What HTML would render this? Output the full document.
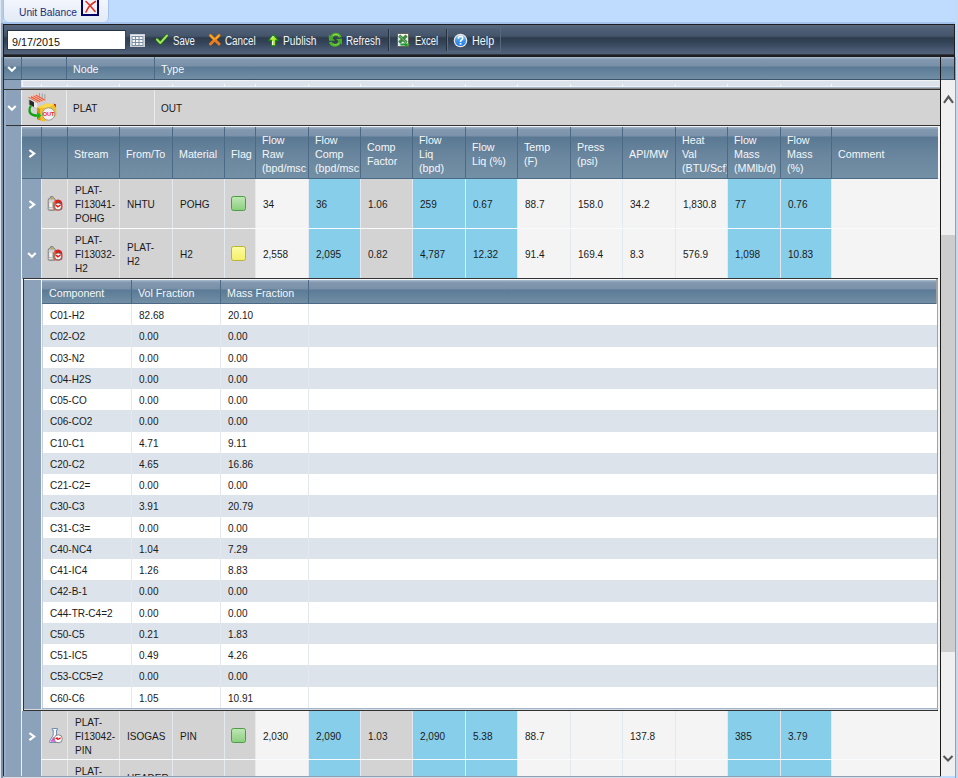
<!DOCTYPE html><html><head><meta charset='utf-8'><style>
*{box-sizing:border-box;margin:0;padding:0}
html,body{width:958px;height:778px;overflow:hidden;background:#bfdbfe;font-family:"Liberation Sans", sans-serif;}
.a{position:absolute}
.t{position:absolute;white-space:nowrap;line-height:14px;transform-origin:0 0}
.hdr{background:linear-gradient(#a3b6c9 0px,#a3b6c9 1px,#8499b0 2px,#7890a8 9px,#5b7a95 10px,#7390a6 100%)}
.hdr2{background:linear-gradient(#9fb2c5 0px,#9fb2c5 1px,#8399b0 2px,#7b92aa 9px,#5a7893 10px,#6a869e 28px,#7390a6 100%)}
.ht{position:absolute;white-space:nowrap;line-height:14px;font-size:11.5px;color:#f4f7fa;transform:scaleX(0.93);transform-origin:0 0}
.dt{position:absolute;white-space:nowrap;line-height:14px;font-size:11px;color:#1a1a1a;transform:scaleX(0.91);transform-origin:0 0}
</style></head><body><div class='a' style='left:0px;top:0px;width:1px;height:778px;background:#dfe6ee;'></div><div class='a' style='left:1px;top:0px;width:2px;height:23px;background:#b3cdea;'></div><div class='a' style='left:1px;top:23px;width:2px;height:34px;background:#8e9fb4;'></div><div class='a' style='left:1px;top:57px;width:2px;height:721px;background:#7b8fa8;'></div><div class='a' style='left:3px;top:-3px;width:106px;height:25px;background:linear-gradient(#f5f8fd,#e2eaf5);border-left:1px solid #a5c3ea;border-right:1px solid #a5c3ea;border-radius:0 0 5px 5px'></div><div class='t' style='left:18.5px;top:4.9px;font-size:11px;color:#1f2b78;transform:scaleX(0.93)'>Unit Balance</div><div class='a' style='left:81px;top:-2px;width:18px;height:18px;border:2px solid #000066;background:#eef2f8'></div><svg class='a' style='left:84px;top:0' width='13' height='14' viewBox='0 0 13 14'><path d='M2 1.5 C5 4 8 8 11 11.5' stroke='#e0301e' stroke-width='1.6' fill='none' stroke-linecap='round'/><path d='M11.5 1.5 C8 3.5 4 7 2 12' stroke='#e0301e' stroke-width='1.6' fill='none' stroke-linecap='round'/></svg><div class='a' style='left:3px;top:22px;width:952px;height:2px;background:#a3c3ec;'></div><div class='a' style='left:3px;top:24px;width:952px;height:33px;background:#1e1e1e;'></div><div class='a' style='left:4px;top:25px;width:950px;height:29px;background:linear-gradient(#58697f 0%,#4e5e74 15%,#44546a 38%,#2e3c4d 45%,#34455a 62%,#475870 85%,#52627a 100%);'></div><div class='a' style='left:4px;top:54px;width:950px;height:1px;background:#2f3844;'></div><div class='a' style='left:7px;top:30px;width:119px;height:20px;background:#fff;border:1px solid #3a4656;border-left-color:#2a3440;border-top-color:#2a3440'></div><div class='t' style='left:12px;top:34.9px;font-size:11px;color:#111;transform:scaleX(0.98)'>9/17/2015</div><div class='t' style='left:173.3px;top:34.1px;color:#f2f5f8;font-size:12px;transform:scaleX(0.8)'>Save</div><div class='t' style='left:225.3px;top:34.1px;color:#f2f5f8;font-size:12px;transform:scaleX(0.82)'>Cancel</div><div class='t' style='left:282.5px;top:34.1px;color:#f2f5f8;font-size:12px;transform:scaleX(0.85)'>Publish</div><div class='t' style='left:346.3px;top:34.1px;color:#f2f5f8;font-size:12px;transform:scaleX(0.82)'>Refresh</div><div class='t' style='left:415.3px;top:34.1px;color:#f2f5f8;font-size:12px;transform:scaleX(0.79)'>Excel</div><div class='t' style='left:472px;top:34.1px;color:#f2f5f8;font-size:12px;transform:scaleX(0.9)'>Help</div><div class='a' style='left:447px;top:27px;width:54px;height:25px;background:transparent;border:1px solid #56687e;border-left:none'></div><div class='a' style='left:388px;top:29px;width:1px;height:22px;background:#27313d;'></div><div class='a' style='left:389px;top:29px;width:1px;height:22px;background:#5d6e84;'></div><div class='a' style='left:446px;top:29px;width:1px;height:22px;background:#27313d;'></div><div class='a' style='left:447px;top:29px;width:1px;height:22px;background:#5d6e84;'></div><svg class='a' style='left:130px;top:34px' width='15' height='13' viewBox='0 0 15 13'><rect x='0.5' y='0.5' width='14' height='12' fill='#e8ecf0' stroke='#c9d0d8'/><rect x='1.5' y='2' width='12' height='10' fill='#7d8fa3'/><g fill='#f4f6f8'><rect x='2.5' y='3' width='2.5' height='2'/><rect x='6' y='3' width='2.5' height='2'/><rect x='9.5' y='3' width='3' height='2'/><rect x='2.5' y='6' width='2.5' height='2'/><rect x='6' y='6' width='2.5' height='2'/><rect x='9.5' y='6' width='3' height='2'/><rect x='2.5' y='9' width='2.5' height='2'/><rect x='6' y='9' width='2.5' height='2'/><rect x='9.5' y='9' width='3' height='2'/></g></svg><svg class='a' style='left:156px;top:34px' width='12' height='11' viewBox='0 0 12 11'>
<path d='M1 5.5 L4.3 9 L11 1.5' stroke='#1d6a12' stroke-width='3.6' fill='none' stroke-linejoin='round' stroke-linecap='round'/>
<path d='M1 5.5 L4.3 9 L11 1.5' stroke='#9fe45a' stroke-width='2' fill='none' stroke-linejoin='round' stroke-linecap='round'/>
</svg><svg class='a' style='left:209px;top:34px' width='12' height='12' viewBox='0 0 12 12'>
<path d='M1.5 1.5 L10 10 M10 1.5 L1.5 10' stroke='#f07a18' stroke-width='3' fill='none' stroke-linecap='round'/>
<path d='M1.5 1.5 L5.5 5.5 M10 1.5 L7 4.5' stroke='#f9b020' stroke-width='1.6' fill='none' stroke-linecap='round'/>
</svg><svg class='a' style='left:268px;top:34px' width='11' height='13' viewBox='0 0 11 13'>
<path d='M5.5 0.8 L10.2 6.3 L7.5 6.3 L7.5 11.8 L3.5 11.8 L3.5 6.3 L0.8 6.3 Z' fill='#b0ee30' stroke='#138a0a' stroke-width='1.2' stroke-linejoin='round'/>
<path d='M5.3 2 L2.5 5.3 M4.5 7 L4.5 11' stroke='#f4ffd8' stroke-width='1' fill='none'/>
</svg><svg class='a' style='left:328px;top:32px' width='15' height='15' viewBox='0 0 15 15'>
<path d='M12.3 5.4 C10.8 1.2 5 0.6 3 6' stroke='#4fb424' stroke-width='2.8' fill='none'/>
<path d='M0.9 2.6 L0.9 8.8 L7 8.8 Z' fill='#48ac20'/>
<path d='M2.2 10 C4 14.4 10 14.8 12.2 9.3' stroke='#4fb424' stroke-width='2.8' fill='none'/>
<path d='M14 6.6 L14 12.8 L8 7 Z' fill='#48ac20'/>
<path d='M11 4 C9.5 2.2 6.5 2 4.8 3.8' stroke='#a6ea5e' stroke-width='1' fill='none'/>
<path d='M5 12 C7 13.4 10 13 11 11' stroke='#8ad84a' stroke-width='0.9' fill='none'/>
</svg><svg class='a' style='left:397px;top:33px' width='14' height='15' viewBox='0 0 14 15'>
<rect x='0.5' y='0.5' width='11' height='13' fill='#dfe9f7' stroke='#6a625a' stroke-width='1'/>
<rect x='1' y='1' width='10' height='2.5' fill='#f6f9fd'/>
<path d='M2.2 2.6 L9.6 9.6 M9.6 2.6 L2.2 9.6' stroke='#3d8a38' stroke-width='3'/>
<path d='M2.6 3 L9 9' stroke='#86bf7e' stroke-width='0.9'/>
<path d='M3.5 10.6 L7.8 10.6 L7.8 8.6 L12.6 11.6 L7.8 14.6 L7.8 12.6 L3.5 12.6 Z' fill='#1f9a2a'/>
<path d='M8.4 9.6 L11.4 11.5' stroke='#8fe07a' stroke-width='1'/>
</svg><svg class='a' style='left:453px;top:33px' width='15' height='15' viewBox='0 0 15 15'>
<defs><linearGradient id='hg' x1='0' y1='0' x2='0' y2='1'><stop offset='0' stop-color='#8ccaf8'/><stop offset='0.5' stop-color='#3e98ef'/><stop offset='1' stop-color='#1a78e6'/></linearGradient></defs>
<circle cx='7.5' cy='7.5' r='6.8' fill='#efe8e0'/>
<circle cx='7.5' cy='7.5' r='5.6' fill='url(#hg)'/>
<path d='M5.3 5.6 Q5.4 3.3 7.6 3.3 Q9.8 3.4 9.7 5.3 Q9.6 6.6 8.2 7.3 Q7.5 7.7 7.5 8.9' stroke='#fff' stroke-width='1.6' fill='none'/>
<rect x='6.6' y='10' width='1.8' height='1.6' fill='#fff'/>
</svg><div class='a' style='left:3px;top:57px;width:938px;height:721px;background:#f4f4f4;'></div><div class='a' style='left:3px;top:57px;width:1px;height:721px;background:#2a2a2a;'></div><div class='a' style='left:940px;top:57px;width:1px;height:721px;background:#1a1a1a;'></div><div class='a hdr' style='left:4px;top:57px;width:936px;height:23px'></div><div class='a' style='left:4px;top:79px;width:936px;height:1px;background:#3d5670;'></div><div class='a hdr' style='left:941px;top:57px;width:14px;height:23px'></div><div class='a' style='left:941px;top:79px;width:14px;height:1px;background:#3d5670;'></div><div class='a' style='left:954px;top:57px;width:1px;height:23px;background:#2a2a2a;'></div><div class='a' style='left:21px;top:57px;width:1px;height:22px;background:#4c6a85;'></div><div class='a' style='left:66px;top:57px;width:1px;height:22px;background:#4c6a85;'></div><div class='a' style='left:154px;top:57px;width:1px;height:22px;background:#4c6a85;'></div><svg class='a' style='left:7px;top:64px' width='10' height='9' viewBox='0 0 10 9'><path d='M1.1 2.9 L4.9 6.8 L8.7 2.9' stroke='#fff' stroke-width='2.1' fill='none'/></svg><div class='ht' style='left:73px;top:61.9px'>Node</div><div class='ht' style='left:161px;top:61.9px'>Type</div><div class='a' style='left:4px;top:80px;width:17px;height:9px;background:#8ca1ba;'></div><div class='a' style='left:21px;top:80px;width:919px;height:9px;background:#dde3ea;'></div><div class='a' style='left:22px;top:80px;width:917px;height:1px;background:#f0f3f6;'></div><div class='a' style='left:22px;top:80px;width:1px;height:7px;background:#f4f6f8;'></div><div class='a' style='left:22px;top:86px;width:917px;height:1px;background:#f0f3f6;'></div><div class='a' style='left:21px;top:87px;width:919px;height:1px;background:#a5b6c8;'></div><div class='a' style='left:21px;top:88px;width:919px;height:1px;background:#8c8c8c;'></div><div class='a' style='left:41px;top:84px;width:1px;height:3px;background:#f6f8fa;'></div><div class='a' style='left:67px;top:84px;width:1px;height:3px;background:#f6f8fa;'></div><div class='a' style='left:119px;top:84px;width:1px;height:3px;background:#f6f8fa;'></div><div class='a' style='left:172px;top:84px;width:1px;height:3px;background:#f6f8fa;'></div><div class='a' style='left:224px;top:84px;width:1px;height:3px;background:#f6f8fa;'></div><div class='a' style='left:255px;top:84px;width:1px;height:3px;background:#f6f8fa;'></div><div class='a' style='left:308px;top:84px;width:1px;height:3px;background:#f6f8fa;'></div><div class='a' style='left:360px;top:84px;width:1px;height:3px;background:#f6f8fa;'></div><div class='a' style='left:412px;top:84px;width:1px;height:3px;background:#f6f8fa;'></div><div class='a' style='left:465px;top:84px;width:1px;height:3px;background:#f6f8fa;'></div><div class='a' style='left:517px;top:84px;width:1px;height:3px;background:#f6f8fa;'></div><div class='a' style='left:570px;top:84px;width:1px;height:3px;background:#f6f8fa;'></div><div class='a' style='left:622px;top:84px;width:1px;height:3px;background:#f6f8fa;'></div><div class='a' style='left:675px;top:84px;width:1px;height:3px;background:#f6f8fa;'></div><div class='a' style='left:727px;top:84px;width:1px;height:3px;background:#f6f8fa;'></div><div class='a' style='left:780px;top:84px;width:1px;height:3px;background:#f6f8fa;'></div><div class='a' style='left:831px;top:84px;width:1px;height:3px;background:#f6f8fa;'></div><div class='a' style='left:3px;top:89px;width:937px;height:1px;background:#333;'></div><div class='a' style='left:4px;top:90px;width:17px;height:35px;background:#8ca1ba;'></div><div class='a' style='left:21px;top:90px;width:919px;height:35px;background:#d3d3d3;'></div><div class='a' style='left:21px;top:90px;width:1px;height:35px;background:#eef0f2;'></div><div class='a' style='left:66px;top:90px;width:1px;height:35px;background:#e8eaec;'></div><div class='a' style='left:154px;top:90px;width:1px;height:35px;background:#e8eaec;'></div><svg class='a' style='left:7px;top:103px' width='10' height='9' viewBox='0 0 10 9'><path d='M1.1 2.9 L4.9 6.8 L8.7 2.9' stroke='#fff' stroke-width='2.1' fill='none'/></svg><svg class='a' style='left:27px;top:92px' width='31' height='31' viewBox='0 0 31 31'>
<g stroke='#9a9a9a' stroke-width='0.9'><path d='M12.5 1 V9'/><path d='M15.2 1.5 V10'/><path d='M17.8 2 V10.5'/></g>
<path d='M1 5 L9 2.5 L19 8 L11 11 Z' fill='#f4d8cc'/>
<g stroke='#ee5a3a' stroke-width='1.25'><path d='M1.5 5.4 L11 10.8'/><path d='M3.9 4.6 L13.4 10'/><path d='M6.3 3.8 L15.8 9.2'/><path d='M8.7 3 L18.2 8.4'/></g>
<path d='M1.2 5.5 L11 11 L11 17.5 L1.8 12.5 Z' fill='#e9e9e9' stroke='#a8a8a8' stroke-width='0.5'/>
<path d='M11 11 L19 8 L19 13.5 L11 17.5 Z' fill='#cfcfcf'/>
<path d='M2.3 7.6 L7 10.2 L7 15 L2.3 12.4 Z' fill='#2a2a2a'/>
<path d='M10 15.5 L20 11.5 L29 12.5 L29.5 24 L17 29.5 L10.5 27.5 Z' fill='#f0bf2a'/>
<path d='M10 15.5 L20 11.5 L29 12.5 L19 16 Z' fill='#fcd84a'/>
<path d='M10 15.5 L13 17 L13.5 28.5 L10.5 27.5 Z' fill='#c99418'/>
<path d='M26.5 11.5 L29 12.5 L28.5 15.5 Z' fill='#b02010'/>
<path d='M4 13.5 Q1.5 17.5 3.2 21 Q5 23.6 10.5 23.6' stroke='#10a010' stroke-width='2.3' fill='none'/>
<path d='M10 20 L14.3 23.6 L10 27.3 Z' fill='#14b814'/>
<circle cx='21.6' cy='22' r='6.2' fill='#f2f2f2' stroke='#8a8a8a' stroke-width='0.8'/>
<text x='21.6' y='24' font-family='Liberation Sans' font-weight='bold' font-size='5.6' fill='#ee1c1c' text-anchor='middle'>OUT</text>
</svg><div class='dt' style='left:73px;top:101.2px'>PLAT</div><div class='dt' style='left:161px;top:101.2px'>OUT</div><div class='a' style='left:3px;top:125px;width:937px;height:1px;background:#333;'></div><div class='a' style='left:4px;top:126px;width:17px;height:650px;background:#8ca1ba;'></div><div class='a' style='left:4px;top:90px;width:2px;height:686px;background:#9aafc6;'></div><div class='a' style='left:21px;top:126px;width:1px;height:650px;background:#eef0f2;'></div><div class='a' style='left:22px;top:126px;width:918px;height:1px;background:#f0f2f4;'></div><div class='a hdr2' style='left:22px;top:127px;width:916px;height:51px'></div><div class='a' style='left:22px;top:178px;width:916px;height:1px;background:#4c6a85;'></div><div class='a' style='left:41px;top:127px;width:1px;height:51px;background:#4c6a85;'></div><div class='a' style='left:67px;top:127px;width:1px;height:51px;background:#4c6a85;'></div><div class='a' style='left:119px;top:127px;width:1px;height:51px;background:#4c6a85;'></div><div class='a' style='left:172px;top:127px;width:1px;height:51px;background:#4c6a85;'></div><div class='a' style='left:224px;top:127px;width:1px;height:51px;background:#4c6a85;'></div><div class='a' style='left:255px;top:127px;width:1px;height:51px;background:#4c6a85;'></div><div class='a' style='left:308px;top:127px;width:1px;height:51px;background:#4c6a85;'></div><div class='a' style='left:360px;top:127px;width:1px;height:51px;background:#4c6a85;'></div><div class='a' style='left:412px;top:127px;width:1px;height:51px;background:#4c6a85;'></div><div class='a' style='left:465px;top:127px;width:1px;height:51px;background:#4c6a85;'></div><div class='a' style='left:517px;top:127px;width:1px;height:51px;background:#4c6a85;'></div><div class='a' style='left:570px;top:127px;width:1px;height:51px;background:#4c6a85;'></div><div class='a' style='left:622px;top:127px;width:1px;height:51px;background:#4c6a85;'></div><div class='a' style='left:675px;top:127px;width:1px;height:51px;background:#4c6a85;'></div><div class='a' style='left:727px;top:127px;width:1px;height:51px;background:#4c6a85;'></div><div class='a' style='left:780px;top:127px;width:1px;height:51px;background:#4c6a85;'></div><div class='a' style='left:831px;top:127px;width:1px;height:51px;background:#4c6a85;'></div><svg class='a' style='left:28px;top:148px' width='8' height='11' viewBox='0 0 8 11'><path d='M1.4 2.0 L6.2 5.6 L1.4 9.2' stroke='#fff' stroke-width='2.1' fill='none'/></svg><div class='ht' style='left:74px;top:146.9px;width:48.39px;overflow:hidden'>Stream</div><div class='ht' style='left:126px;top:146.9px;width:49.46px;overflow:hidden'>From/To</div><div class='ht' style='left:179px;top:146.9px;width:48.39px;overflow:hidden'>Material</div><div class='ht' style='left:231px;top:146.9px;width:25.81px;overflow:hidden'>Flag</div><div class='ht' style='left:262px;top:132.9px;width:49.46px;overflow:hidden'>Flow<br>Raw<br>(bpd/msc</div><div class='ht' style='left:315px;top:132.9px;width:48.39px;overflow:hidden'>Flow<br>Comp<br>(bpd/msc</div><div class='ht' style='left:367px;top:139.9px;width:48.39px;overflow:hidden'>Comp<br>Factor</div><div class='ht' style='left:419px;top:132.9px;width:49.46px;overflow:hidden'>Flow<br>Liq<br>(bpd)</div><div class='ht' style='left:472px;top:139.9px;width:48.39px;overflow:hidden'>Flow<br>Liq (%)</div><div class='ht' style='left:524px;top:139.9px;width:49.46px;overflow:hidden'>Temp<br>(F)</div><div class='ht' style='left:577px;top:139.9px;width:48.39px;overflow:hidden'>Press<br>(psi)</div><div class='ht' style='left:629px;top:146.9px;width:49.46px;overflow:hidden'>API/MW</div><div class='ht' style='left:682px;top:132.9px;width:48.39px;overflow:hidden'>Heat<br>Val<br>(BTU/Scf)</div><div class='ht' style='left:734px;top:132.9px;width:49.46px;overflow:hidden'>Flow<br>Mass<br>(MMlb/d)</div><div class='ht' style='left:787px;top:132.9px;width:47.31px;overflow:hidden'>Flow<br>Mass<br>(%)</div><div class='ht' style='left:838px;top:146.9px;width:107.53px;overflow:hidden'>Comment</div><div class='a' style='left:22px;top:179px;width:19px;height:50px;background:#8ca1ba;'></div><div class='a' style='left:41px;top:179px;width:1px;height:49px;background:#e4e9ef;'></div><div class='a' style='left:42px;top:179px;width:25px;height:49px;background:#d3d3d3;'></div><div class='a' style='left:67px;top:179px;width:1px;height:49px;background:#e4e9ef;'></div><div class='a' style='left:68px;top:179px;width:51px;height:49px;background:#d3d3d3;'></div><div class='a' style='left:119px;top:179px;width:1px;height:49px;background:#e4e9ef;'></div><div class='a' style='left:120px;top:179px;width:52px;height:49px;background:#d3d3d3;'></div><div class='a' style='left:172px;top:179px;width:1px;height:49px;background:#e4e9ef;'></div><div class='a' style='left:173px;top:179px;width:51px;height:49px;background:#d3d3d3;'></div><div class='a' style='left:224px;top:179px;width:1px;height:49px;background:#e4e9ef;'></div><div class='a' style='left:225px;top:179px;width:30px;height:49px;background:#d3d3d3;'></div><div class='a' style='left:255px;top:179px;width:1px;height:49px;background:#e4e9ef;'></div><div class='a' style='left:256px;top:179px;width:52px;height:49px;background:#f4f4f4;'></div><div class='a' style='left:308px;top:179px;width:1px;height:49px;background:#e4e9ef;'></div><div class='a' style='left:309px;top:179px;width:51px;height:49px;background:#87ceeb;'></div><div class='a' style='left:360px;top:179px;width:1px;height:49px;background:#e4e9ef;'></div><div class='a' style='left:361px;top:179px;width:51px;height:49px;background:#d3d3d3;'></div><div class='a' style='left:412px;top:179px;width:1px;height:49px;background:#e4e9ef;'></div><div class='a' style='left:413px;top:179px;width:52px;height:49px;background:#87ceeb;'></div><div class='a' style='left:465px;top:179px;width:1px;height:49px;background:#e4e9ef;'></div><div class='a' style='left:466px;top:179px;width:51px;height:49px;background:#87ceeb;'></div><div class='a' style='left:517px;top:179px;width:1px;height:49px;background:#e4e9ef;'></div><div class='a' style='left:518px;top:179px;width:52px;height:49px;background:#f4f4f4;'></div><div class='a' style='left:570px;top:179px;width:1px;height:49px;background:#e4e9ef;'></div><div class='a' style='left:571px;top:179px;width:51px;height:49px;background:#f4f4f4;'></div><div class='a' style='left:622px;top:179px;width:1px;height:49px;background:#e4e9ef;'></div><div class='a' style='left:623px;top:179px;width:52px;height:49px;background:#f4f4f4;'></div><div class='a' style='left:675px;top:179px;width:1px;height:49px;background:#e4e9ef;'></div><div class='a' style='left:676px;top:179px;width:51px;height:49px;background:#f4f4f4;'></div><div class='a' style='left:727px;top:179px;width:1px;height:49px;background:#e4e9ef;'></div><div class='a' style='left:728px;top:179px;width:52px;height:49px;background:#87ceeb;'></div><div class='a' style='left:780px;top:179px;width:1px;height:49px;background:#e4e9ef;'></div><div class='a' style='left:781px;top:179px;width:50px;height:49px;background:#87ceeb;'></div><div class='a' style='left:831px;top:179px;width:1px;height:49px;background:#e4e9ef;'></div><div class='a' style='left:832px;top:179px;width:106px;height:49px;background:#f4f4f4;'></div><div class='a' style='left:41px;top:228px;width:897px;height:1px;background:#fafbfc;'></div><svg class='a' style='left:47px;top:196px' width='17' height='16' viewBox='0 0 17 16'>
<path d='M1.2 4 Q1.2 2.4 3.3 2 L3.6 0.6 L6 0.6 L6.3 2 Q8.3 2.4 8.3 4 L8.3 13.3 Q8.3 14.3 7.3 14.3 L2.2 14.3 Q1.2 14.3 1.2 13.3 Z' fill='#bdbdbd' stroke='#7c7c7c' stroke-width='0.9'/>
<circle cx='4.8' cy='2.3' r='1' fill='#d8a800'/>
<rect x='1.8' y='4.5' width='6' height='1.2' fill='#e6e6e6'/>
<rect x='2.3' y='6.5' width='2.6' height='4.5' fill='#f6f6f6'/>
<rect x='1.8' y='12' width='6' height='1' fill='#e0e0e0'/>
<path d='M6.3 8 Q6.5 4 11 3.6 Q15.3 4 15.4 8 L15.4 12 Q15 14.6 11 14.6 Q6.8 14.6 6.3 12 Z' fill='#d62424'/>
<path d='M6.3 8 Q6.5 5.5 8.5 4.6 L8.5 14 Q6.8 13.5 6.3 12 Z' fill='#e06a3a'/>
<circle cx='11.1' cy='10.4' r='3.5' fill='#fafafa' stroke='#5a5a5a' stroke-width='0.8'/>
<path d='M8.6 10.2 L9.8 9.4 L10.8 10.8 L13.4 9.2' stroke='#ee1010' stroke-width='1.4' fill='none'/>
</svg><svg class='a' style='left:28px;top:199px' width='8' height='11' viewBox='0 0 8 11'><path d='M1.4 2.0 L6.2 5.6 L1.4 9.2' stroke='#fff' stroke-width='2.1' fill='none'/></svg><div class='dt' style='left:74.5px;top:183.4px'>PLAT-<br>FI13041-<br>POHG</div><div class='dt' style='left:126.5px;top:197.4px'>NHTU</div><div class='dt' style='left:179.5px;top:197.4px'>POHG</div><div class='a' style='left:231px;top:196px;width:15px;height:15px;background:linear-gradient(#bde6b3,#8ccf80);border:1px solid #4e9c46;border-radius:2.5px'></div><div class='dt' style='left:262.5px;top:197.4px'>34</div><div class='dt' style='left:315.5px;top:197.4px'>36</div><div class='dt' style='left:367.5px;top:197.4px'>1.06</div><div class='dt' style='left:419.5px;top:197.4px'>259</div><div class='dt' style='left:472.5px;top:197.4px'>0.67</div><div class='dt' style='left:524.5px;top:197.4px'>88.7</div><div class='dt' style='left:577.5px;top:197.4px'>158.0</div><div class='dt' style='left:629.5px;top:197.4px'>34.2</div><div class='dt' style='left:682.5px;top:197.4px'>1,830.8</div><div class='dt' style='left:734.5px;top:197.4px'>77</div><div class='dt' style='left:787.5px;top:197.4px'>0.76</div><div class='a' style='left:22px;top:229px;width:19px;height:50px;background:#8ca1ba;'></div><div class='a' style='left:41px;top:229px;width:1px;height:49px;background:#e4e9ef;'></div><div class='a' style='left:42px;top:229px;width:25px;height:49px;background:#d3d3d3;'></div><div class='a' style='left:67px;top:229px;width:1px;height:49px;background:#e4e9ef;'></div><div class='a' style='left:68px;top:229px;width:51px;height:49px;background:#d3d3d3;'></div><div class='a' style='left:119px;top:229px;width:1px;height:49px;background:#e4e9ef;'></div><div class='a' style='left:120px;top:229px;width:52px;height:49px;background:#d3d3d3;'></div><div class='a' style='left:172px;top:229px;width:1px;height:49px;background:#e4e9ef;'></div><div class='a' style='left:173px;top:229px;width:51px;height:49px;background:#d3d3d3;'></div><div class='a' style='left:224px;top:229px;width:1px;height:49px;background:#e4e9ef;'></div><div class='a' style='left:225px;top:229px;width:30px;height:49px;background:#d3d3d3;'></div><div class='a' style='left:255px;top:229px;width:1px;height:49px;background:#e4e9ef;'></div><div class='a' style='left:256px;top:229px;width:52px;height:49px;background:#f4f4f4;'></div><div class='a' style='left:308px;top:229px;width:1px;height:49px;background:#e4e9ef;'></div><div class='a' style='left:309px;top:229px;width:51px;height:49px;background:#87ceeb;'></div><div class='a' style='left:360px;top:229px;width:1px;height:49px;background:#e4e9ef;'></div><div class='a' style='left:361px;top:229px;width:51px;height:49px;background:#d3d3d3;'></div><div class='a' style='left:412px;top:229px;width:1px;height:49px;background:#e4e9ef;'></div><div class='a' style='left:413px;top:229px;width:52px;height:49px;background:#87ceeb;'></div><div class='a' style='left:465px;top:229px;width:1px;height:49px;background:#e4e9ef;'></div><div class='a' style='left:466px;top:229px;width:51px;height:49px;background:#87ceeb;'></div><div class='a' style='left:517px;top:229px;width:1px;height:49px;background:#e4e9ef;'></div><div class='a' style='left:518px;top:229px;width:52px;height:49px;background:#f4f4f4;'></div><div class='a' style='left:570px;top:229px;width:1px;height:49px;background:#e4e9ef;'></div><div class='a' style='left:571px;top:229px;width:51px;height:49px;background:#f4f4f4;'></div><div class='a' style='left:622px;top:229px;width:1px;height:49px;background:#e4e9ef;'></div><div class='a' style='left:623px;top:229px;width:52px;height:49px;background:#f4f4f4;'></div><div class='a' style='left:675px;top:229px;width:1px;height:49px;background:#e4e9ef;'></div><div class='a' style='left:676px;top:229px;width:51px;height:49px;background:#f4f4f4;'></div><div class='a' style='left:727px;top:229px;width:1px;height:49px;background:#e4e9ef;'></div><div class='a' style='left:728px;top:229px;width:52px;height:49px;background:#87ceeb;'></div><div class='a' style='left:780px;top:229px;width:1px;height:49px;background:#e4e9ef;'></div><div class='a' style='left:781px;top:229px;width:50px;height:49px;background:#87ceeb;'></div><div class='a' style='left:831px;top:229px;width:1px;height:49px;background:#e4e9ef;'></div><div class='a' style='left:832px;top:229px;width:106px;height:49px;background:#f4f4f4;'></div><div class='a' style='left:41px;top:278px;width:897px;height:1px;background:#fafbfc;'></div><svg class='a' style='left:47px;top:246px' width='17' height='16' viewBox='0 0 17 16'>
<path d='M1.2 4 Q1.2 2.4 3.3 2 L3.6 0.6 L6 0.6 L6.3 2 Q8.3 2.4 8.3 4 L8.3 13.3 Q8.3 14.3 7.3 14.3 L2.2 14.3 Q1.2 14.3 1.2 13.3 Z' fill='#bdbdbd' stroke='#7c7c7c' stroke-width='0.9'/>
<circle cx='4.8' cy='2.3' r='1' fill='#d8a800'/>
<rect x='1.8' y='4.5' width='6' height='1.2' fill='#e6e6e6'/>
<rect x='2.3' y='6.5' width='2.6' height='4.5' fill='#f6f6f6'/>
<rect x='1.8' y='12' width='6' height='1' fill='#e0e0e0'/>
<path d='M6.3 8 Q6.5 4 11 3.6 Q15.3 4 15.4 8 L15.4 12 Q15 14.6 11 14.6 Q6.8 14.6 6.3 12 Z' fill='#d62424'/>
<path d='M6.3 8 Q6.5 5.5 8.5 4.6 L8.5 14 Q6.8 13.5 6.3 12 Z' fill='#e06a3a'/>
<circle cx='11.1' cy='10.4' r='3.5' fill='#fafafa' stroke='#5a5a5a' stroke-width='0.8'/>
<path d='M8.6 10.2 L9.8 9.4 L10.8 10.8 L13.4 9.2' stroke='#ee1010' stroke-width='1.4' fill='none'/>
</svg><svg class='a' style='left:27px;top:250px' width='10' height='9' viewBox='0 0 10 9'><path d='M1.1 2.9 L4.9 6.8 L8.7 2.9' stroke='#fff' stroke-width='2.1' fill='none'/></svg><div class='dt' style='left:74.5px;top:233.4px'>PLAT-<br>FI13032-<br>H2</div><div class='dt' style='left:126.5px;top:240.4px'>PLAT-<br>H2</div><div class='dt' style='left:179.5px;top:247.4px'>H2</div><div class='a' style='left:231px;top:246px;width:15px;height:15px;background:linear-gradient(#fdfca0,#f4f06a);border:1px solid #b9b43a;border-radius:2.5px'></div><div class='dt' style='left:262.5px;top:247.4px'>2,558</div><div class='dt' style='left:315.5px;top:247.4px'>2,095</div><div class='dt' style='left:367.5px;top:247.4px'>0.82</div><div class='dt' style='left:419.5px;top:247.4px'>4,787</div><div class='dt' style='left:472.5px;top:247.4px'>12.32</div><div class='dt' style='left:524.5px;top:247.4px'>91.4</div><div class='dt' style='left:577.5px;top:247.4px'>169.4</div><div class='dt' style='left:629.5px;top:247.4px'>8.3</div><div class='dt' style='left:682.5px;top:247.4px'>576.9</div><div class='dt' style='left:734.5px;top:247.4px'>1,098</div><div class='dt' style='left:787.5px;top:247.4px'>10.83</div><div class='a' style='left:22px;top:711px;width:19px;height:49px;background:#8ca1ba;'></div><div class='a' style='left:41px;top:711px;width:1px;height:48px;background:#e4e9ef;'></div><div class='a' style='left:42px;top:711px;width:25px;height:48px;background:#d3d3d3;'></div><div class='a' style='left:67px;top:711px;width:1px;height:48px;background:#e4e9ef;'></div><div class='a' style='left:68px;top:711px;width:51px;height:48px;background:#d3d3d3;'></div><div class='a' style='left:119px;top:711px;width:1px;height:48px;background:#e4e9ef;'></div><div class='a' style='left:120px;top:711px;width:52px;height:48px;background:#d3d3d3;'></div><div class='a' style='left:172px;top:711px;width:1px;height:48px;background:#e4e9ef;'></div><div class='a' style='left:173px;top:711px;width:51px;height:48px;background:#d3d3d3;'></div><div class='a' style='left:224px;top:711px;width:1px;height:48px;background:#e4e9ef;'></div><div class='a' style='left:225px;top:711px;width:30px;height:48px;background:#d3d3d3;'></div><div class='a' style='left:255px;top:711px;width:1px;height:48px;background:#e4e9ef;'></div><div class='a' style='left:256px;top:711px;width:52px;height:48px;background:#f4f4f4;'></div><div class='a' style='left:308px;top:711px;width:1px;height:48px;background:#e4e9ef;'></div><div class='a' style='left:309px;top:711px;width:51px;height:48px;background:#87ceeb;'></div><div class='a' style='left:360px;top:711px;width:1px;height:48px;background:#e4e9ef;'></div><div class='a' style='left:361px;top:711px;width:51px;height:48px;background:#d3d3d3;'></div><div class='a' style='left:412px;top:711px;width:1px;height:48px;background:#e4e9ef;'></div><div class='a' style='left:413px;top:711px;width:52px;height:48px;background:#87ceeb;'></div><div class='a' style='left:465px;top:711px;width:1px;height:48px;background:#e4e9ef;'></div><div class='a' style='left:466px;top:711px;width:51px;height:48px;background:#87ceeb;'></div><div class='a' style='left:517px;top:711px;width:1px;height:48px;background:#e4e9ef;'></div><div class='a' style='left:518px;top:711px;width:52px;height:48px;background:#f4f4f4;'></div><div class='a' style='left:570px;top:711px;width:1px;height:48px;background:#e4e9ef;'></div><div class='a' style='left:571px;top:711px;width:51px;height:48px;background:#f4f4f4;'></div><div class='a' style='left:622px;top:711px;width:1px;height:48px;background:#e4e9ef;'></div><div class='a' style='left:623px;top:711px;width:52px;height:48px;background:#f4f4f4;'></div><div class='a' style='left:675px;top:711px;width:1px;height:48px;background:#e4e9ef;'></div><div class='a' style='left:676px;top:711px;width:51px;height:48px;background:#f4f4f4;'></div><div class='a' style='left:727px;top:711px;width:1px;height:48px;background:#e4e9ef;'></div><div class='a' style='left:728px;top:711px;width:52px;height:48px;background:#87ceeb;'></div><div class='a' style='left:780px;top:711px;width:1px;height:48px;background:#e4e9ef;'></div><div class='a' style='left:781px;top:711px;width:50px;height:48px;background:#87ceeb;'></div><div class='a' style='left:831px;top:711px;width:1px;height:48px;background:#e4e9ef;'></div><div class='a' style='left:832px;top:711px;width:106px;height:48px;background:#f4f4f4;'></div><div class='a' style='left:41px;top:759px;width:897px;height:1px;background:#fafbfc;'></div><svg class='a' style='left:48px;top:728px' width='16' height='16' viewBox='0 0 16 16'>
<path d='M4.2 0.5 L9.5 0.5 L9.5 2 L8.5 2 L8.5 7 L12 13.5 Q12.5 14.5 11.5 14.5 L2 14.5 Q1 14.5 1.5 13.5 L5.2 7 L5.2 2 L4.2 2 Z' fill='#f8f6fa' stroke='#6e8faf' stroke-width='1'/>
<path d='M5.5 9 L8.3 9 L11.2 13.8 L2.3 13.8 Z' fill='#e650d0'/>
<circle cx='10.3' cy='10.8' r='4' fill='#fff' stroke='#707070' stroke-width='0.8'/>
<path d='M7.6 11 L9 10 L10 11.4 L12.8 9.8' stroke='#ee1010' stroke-width='1.3' fill='none'/>
</svg><svg class='a' style='left:28px;top:731px' width='8' height='11' viewBox='0 0 8 11'><path d='M1.4 2.0 L6.2 5.6 L1.4 9.2' stroke='#fff' stroke-width='2.1' fill='none'/></svg><div class='dt' style='left:74.5px;top:714.9px'>PLAT-<br>FI13042-<br>PIN</div><div class='dt' style='left:126.5px;top:728.9px'>ISOGAS</div><div class='dt' style='left:179.5px;top:728.9px'>PIN</div><div class='a' style='left:231px;top:728px;width:15px;height:15px;background:linear-gradient(#bde6b3,#8ccf80);border:1px solid #4e9c46;border-radius:2.5px'></div><div class='dt' style='left:262.5px;top:728.9px'>2,030</div><div class='dt' style='left:315.5px;top:728.9px'>2,090</div><div class='dt' style='left:367.5px;top:728.9px'>1.03</div><div class='dt' style='left:419.5px;top:728.9px'>2,090</div><div class='dt' style='left:472.5px;top:728.9px'>5.38</div><div class='dt' style='left:524.5px;top:728.9px'>88.7</div><div class='dt' style='left:629.5px;top:728.9px'>137.8</div><div class='dt' style='left:734.5px;top:728.9px'>385</div><div class='dt' style='left:787.5px;top:728.9px'>3.79</div><div class='a' style='left:22px;top:760px;width:19px;height:50px;background:#8ca1ba;'></div><div class='a' style='left:41px;top:760px;width:1px;height:49px;background:#e4e9ef;'></div><div class='a' style='left:42px;top:760px;width:25px;height:49px;background:#d3d3d3;'></div><div class='a' style='left:67px;top:760px;width:1px;height:49px;background:#e4e9ef;'></div><div class='a' style='left:68px;top:760px;width:51px;height:49px;background:#d3d3d3;'></div><div class='a' style='left:119px;top:760px;width:1px;height:49px;background:#e4e9ef;'></div><div class='a' style='left:120px;top:760px;width:52px;height:49px;background:#d3d3d3;'></div><div class='a' style='left:172px;top:760px;width:1px;height:49px;background:#e4e9ef;'></div><div class='a' style='left:173px;top:760px;width:51px;height:49px;background:#d3d3d3;'></div><div class='a' style='left:224px;top:760px;width:1px;height:49px;background:#e4e9ef;'></div><div class='a' style='left:225px;top:760px;width:30px;height:49px;background:#d3d3d3;'></div><div class='a' style='left:255px;top:760px;width:1px;height:49px;background:#e4e9ef;'></div><div class='a' style='left:256px;top:760px;width:52px;height:49px;background:#f4f4f4;'></div><div class='a' style='left:308px;top:760px;width:1px;height:49px;background:#e4e9ef;'></div><div class='a' style='left:309px;top:760px;width:51px;height:49px;background:#87ceeb;'></div><div class='a' style='left:360px;top:760px;width:1px;height:49px;background:#e4e9ef;'></div><div class='a' style='left:361px;top:760px;width:51px;height:49px;background:#d3d3d3;'></div><div class='a' style='left:412px;top:760px;width:1px;height:49px;background:#e4e9ef;'></div><div class='a' style='left:413px;top:760px;width:52px;height:49px;background:#87ceeb;'></div><div class='a' style='left:465px;top:760px;width:1px;height:49px;background:#e4e9ef;'></div><div class='a' style='left:466px;top:760px;width:51px;height:49px;background:#87ceeb;'></div><div class='a' style='left:517px;top:760px;width:1px;height:49px;background:#e4e9ef;'></div><div class='a' style='left:518px;top:760px;width:52px;height:49px;background:#f4f4f4;'></div><div class='a' style='left:570px;top:760px;width:1px;height:49px;background:#e4e9ef;'></div><div class='a' style='left:571px;top:760px;width:51px;height:49px;background:#f4f4f4;'></div><div class='a' style='left:622px;top:760px;width:1px;height:49px;background:#e4e9ef;'></div><div class='a' style='left:623px;top:760px;width:52px;height:49px;background:#f4f4f4;'></div><div class='a' style='left:675px;top:760px;width:1px;height:49px;background:#e4e9ef;'></div><div class='a' style='left:676px;top:760px;width:51px;height:49px;background:#f4f4f4;'></div><div class='a' style='left:727px;top:760px;width:1px;height:49px;background:#e4e9ef;'></div><div class='a' style='left:728px;top:760px;width:52px;height:49px;background:#87ceeb;'></div><div class='a' style='left:780px;top:760px;width:1px;height:49px;background:#e4e9ef;'></div><div class='a' style='left:781px;top:760px;width:50px;height:49px;background:#87ceeb;'></div><div class='a' style='left:831px;top:760px;width:1px;height:49px;background:#e4e9ef;'></div><div class='a' style='left:832px;top:760px;width:106px;height:49px;background:#f4f4f4;'></div><div class='a' style='left:41px;top:809px;width:897px;height:1px;background:#fafbfc;'></div><div class='dt' style='left:74.5px;top:764.4px'>PLAT-<br>FI13xxx-<br>X</div><div class='dt' style='left:126.5px;top:771.4px'>HEADER<br>X</div><div class='a' style='left:23px;top:278px;width:915px;height:433px;background:#fff;'></div><div class='a' style='left:23px;top:278px;width:915px;height:1px;background:#333;'></div><div class='a' style='left:23px;top:278px;width:1px;height:432px;background:#333;'></div><div class='a' style='left:23px;top:710px;width:915px;height:1px;background:#333;'></div><div class='a' style='left:24px;top:279px;width:17px;height:431px;background:#8ca1ba;'></div><div class='a' style='left:41px;top:279px;width:1px;height:431px;background:#f4f6f8;'></div><div class='a' style='left:24px;top:279px;width:913px;height:1px;background:#f4f6f8;'></div><div class='a hdr' style='left:42px;top:280px;width:895px;height:24px'></div><div class='a' style='left:42px;top:303px;width:895px;height:1px;background:#4c6a85;'></div><div class='a' style='left:131px;top:280px;width:1px;height:23px;background:#4c6a85;'></div><div class='a' style='left:220px;top:280px;width:1px;height:23px;background:#4c6a85;'></div><div class='a' style='left:308px;top:280px;width:1px;height:23px;background:#4c6a85;'></div><div class='a' style='left:936px;top:279px;width:2px;height:431px;background:#a3a3a3;'></div><div class='ht' style='left:49px;top:286.2px'>Component</div><div class='ht' style='left:138px;top:286.2px'>Vol Fraction</div><div class='ht' style='left:227px;top:286.2px'>Mass Fraction</div><div class='a' style='left:42px;top:304px;width:895px;height:21px;background:#ffffff;'></div><div class='dt' style='left:49.5px;top:308.3px'>C01-H2</div><div class='dt' style='left:138.5px;top:308.3px'>82.68</div><div class='dt' style='left:227.5px;top:308.3px'>20.10</div><div class='a' style='left:42px;top:325px;width:895px;height:22px;background:#dce3ea;'></div><div class='dt' style='left:49.5px;top:329.3px'>C02-O2</div><div class='dt' style='left:138.5px;top:329.3px'>0.00</div><div class='dt' style='left:227.5px;top:329.3px'>0.00</div><div class='a' style='left:42px;top:347px;width:895px;height:21px;background:#ffffff;'></div><div class='dt' style='left:49.5px;top:351.3px'>C03-N2</div><div class='dt' style='left:138.5px;top:351.3px'>0.00</div><div class='dt' style='left:227.5px;top:351.3px'>0.00</div><div class='a' style='left:42px;top:368px;width:895px;height:21px;background:#dce3ea;'></div><div class='dt' style='left:49.5px;top:372.3px'>C04-H2S</div><div class='dt' style='left:138.5px;top:372.3px'>0.00</div><div class='dt' style='left:227.5px;top:372.3px'>0.00</div><div class='a' style='left:42px;top:389px;width:895px;height:21px;background:#ffffff;'></div><div class='dt' style='left:49.5px;top:393.3px'>C05-CO</div><div class='dt' style='left:138.5px;top:393.3px'>0.00</div><div class='dt' style='left:227.5px;top:393.3px'>0.00</div><div class='a' style='left:42px;top:410px;width:895px;height:22px;background:#dce3ea;'></div><div class='dt' style='left:49.5px;top:414.3px'>C06-CO2</div><div class='dt' style='left:138.5px;top:414.3px'>0.00</div><div class='dt' style='left:227.5px;top:414.3px'>0.00</div><div class='a' style='left:42px;top:432px;width:895px;height:21px;background:#ffffff;'></div><div class='dt' style='left:49.5px;top:436.3px'>C10-C1</div><div class='dt' style='left:138.5px;top:436.3px'>4.71</div><div class='dt' style='left:227.5px;top:436.3px'>9.11</div><div class='a' style='left:42px;top:453px;width:895px;height:21px;background:#dce3ea;'></div><div class='dt' style='left:49.5px;top:457.3px'>C20-C2</div><div class='dt' style='left:138.5px;top:457.3px'>4.65</div><div class='dt' style='left:227.5px;top:457.3px'>16.86</div><div class='a' style='left:42px;top:474px;width:895px;height:21px;background:#ffffff;'></div><div class='dt' style='left:49.5px;top:478.3px'>C21-C2=</div><div class='dt' style='left:138.5px;top:478.3px'>0.00</div><div class='dt' style='left:227.5px;top:478.3px'>0.00</div><div class='a' style='left:42px;top:495px;width:895px;height:22px;background:#dce3ea;'></div><div class='dt' style='left:49.5px;top:499.3px'>C30-C3</div><div class='dt' style='left:138.5px;top:499.3px'>3.91</div><div class='dt' style='left:227.5px;top:499.3px'>20.79</div><div class='a' style='left:42px;top:517px;width:895px;height:21px;background:#ffffff;'></div><div class='dt' style='left:49.5px;top:521.3px'>C31-C3=</div><div class='dt' style='left:138.5px;top:521.3px'>0.00</div><div class='dt' style='left:227.5px;top:521.3px'>0.00</div><div class='a' style='left:42px;top:538px;width:895px;height:21px;background:#dce3ea;'></div><div class='dt' style='left:49.5px;top:542.3px'>C40-NC4</div><div class='dt' style='left:138.5px;top:542.3px'>1.04</div><div class='dt' style='left:227.5px;top:542.3px'>7.29</div><div class='a' style='left:42px;top:559px;width:895px;height:21px;background:#ffffff;'></div><div class='dt' style='left:49.5px;top:563.3px'>C41-IC4</div><div class='dt' style='left:138.5px;top:563.3px'>1.26</div><div class='dt' style='left:227.5px;top:563.3px'>8.83</div><div class='a' style='left:42px;top:580px;width:895px;height:22px;background:#dce3ea;'></div><div class='dt' style='left:49.5px;top:584.3px'>C42-B-1</div><div class='dt' style='left:138.5px;top:584.3px'>0.00</div><div class='dt' style='left:227.5px;top:584.3px'>0.00</div><div class='a' style='left:42px;top:602px;width:895px;height:21px;background:#ffffff;'></div><div class='dt' style='left:49.5px;top:606.3px'>C44-TR-C4=2</div><div class='dt' style='left:138.5px;top:606.3px'>0.00</div><div class='dt' style='left:227.5px;top:606.3px'>0.00</div><div class='a' style='left:42px;top:623px;width:895px;height:21px;background:#dce3ea;'></div><div class='dt' style='left:49.5px;top:627.3px'>C50-C5</div><div class='dt' style='left:138.5px;top:627.3px'>0.21</div><div class='dt' style='left:227.5px;top:627.3px'>1.83</div><div class='a' style='left:42px;top:644px;width:895px;height:21px;background:#ffffff;'></div><div class='dt' style='left:49.5px;top:648.3px'>C51-IC5</div><div class='dt' style='left:138.5px;top:648.3px'>0.49</div><div class='dt' style='left:227.5px;top:648.3px'>4.26</div><div class='a' style='left:42px;top:665px;width:895px;height:22px;background:#dce3ea;'></div><div class='dt' style='left:49.5px;top:669.3px'>C53-CC5=2</div><div class='dt' style='left:138.5px;top:669.3px'>0.00</div><div class='dt' style='left:227.5px;top:669.3px'>0.00</div><div class='a' style='left:42px;top:687px;width:895px;height:21px;background:#ffffff;'></div><div class='dt' style='left:49.5px;top:691.3px'>C60-C6</div><div class='dt' style='left:138.5px;top:691.3px'>1.05</div><div class='dt' style='left:227.5px;top:691.3px'>10.91</div><div class='a' style='left:131px;top:304px;width:1px;height:405px;background:#e3e8ee;'></div><div class='a' style='left:220px;top:304px;width:1px;height:405px;background:#e3e8ee;'></div><div class='a' style='left:308px;top:304px;width:1px;height:405px;background:#e3e8ee;'></div><div class='a' style='left:42px;top:708px;width:895px;height:1px;background:#a3b5c8;'></div><div class='a' style='left:24px;top:709px;width:913px;height:1px;background:#d5dae0;'></div><div class='a' style='left:42px;top:304px;width:1px;height:404px;background:#c9d3de;'></div><div class='a' style='left:3px;top:776px;width:938px;height:1px;background:#8fa0b4;'></div><div class='a' style='left:3px;top:777px;width:938px;height:1px;background:#d8dee6;'></div><div class='a' style='left:941px;top:80px;width:14px;height:696px;background:#f0f0f0;'></div><div class='a' style='left:941px;top:235px;width:14px;height:417px;background:#cdcdcd;'></div><svg class='a' style='left:942px;top:93px' width='13' height='12' viewBox='0 0 13 12'><path d='M2 9.8 L6.5 3.6 L11 9.8' stroke='#595959' stroke-width='2.2' fill='none'/></svg><svg class='a' style='left:942px;top:754px' width='12' height='9' viewBox='0 0 12 9'><path d='M1.5 2 L6 6.5 L10.5 2' stroke='#555' stroke-width='2' fill='none'/></svg><div class='a' style='left:955px;top:0px;width:3px;height:778px;background:#c3daf3;'></div><div class='a' style='left:955px;top:57px;width:1px;height:721px;background:#8fa2b8;'></div></body></html>
